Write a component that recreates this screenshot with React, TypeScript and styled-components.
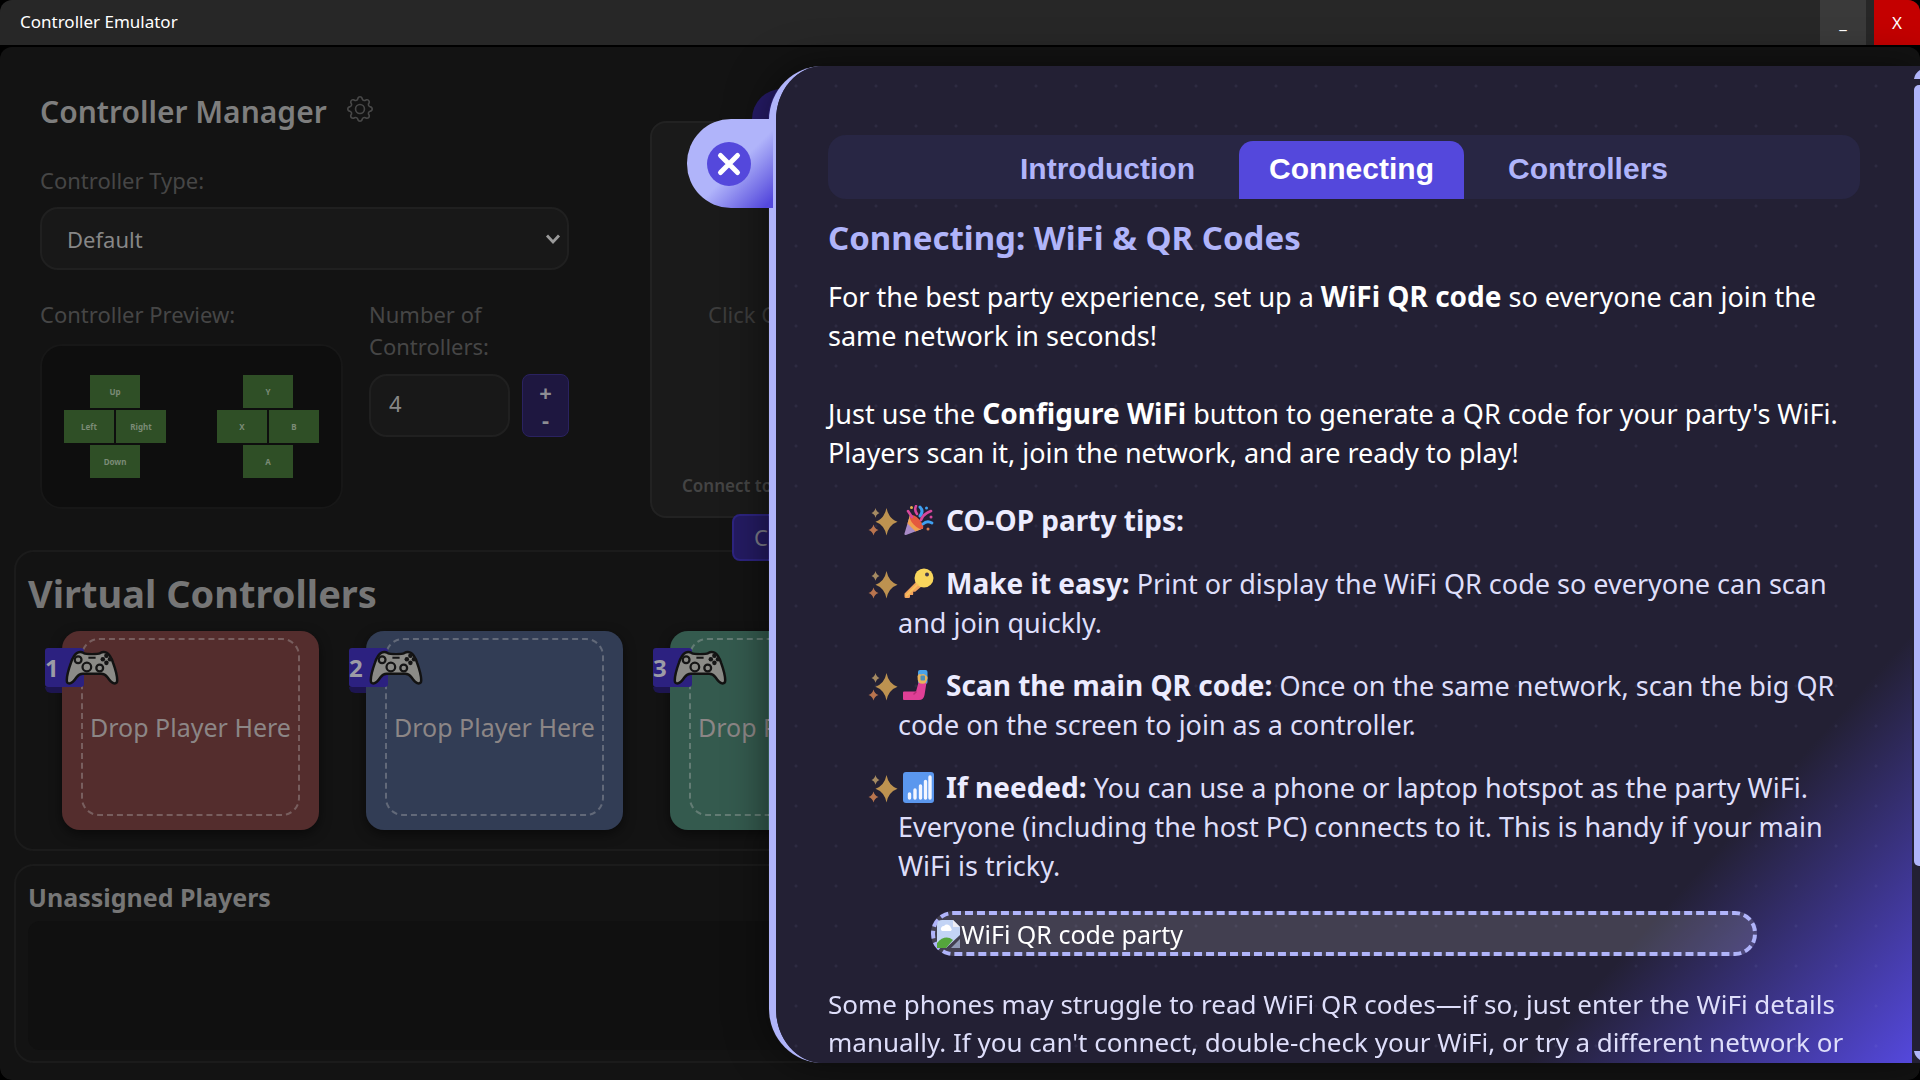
import React, { useState } from "react";
import styled, { createGlobalStyle, css } from "styled-components";
import { BsGear } from "react-icons/bs";

const accent = "#5448dc";
const lilac = "#b0b4fa";

const GlobalStyle = createGlobalStyle`
  *, *::before, *::after { box-sizing: border-box; }
  body {
    margin: 0;
    background: #000;
    font-family: "Noto Sans", "Open Sans", sans-serif;
    overflow: hidden;
  }
  h1, h2, p, ul { margin: 0; padding: 0; }
  button, input, select { font-family: inherit; margin: 0; }
`;

/* ---------- window frame ---------- */

const Window = styled.div`
  display: flex;
  flex-direction: column;
  gap: 2px;
  min-height: 100vh;
  border-radius: 12px;
  overflow: hidden;
  background: #000;
`;

const TitleBar = styled.header`
  display: flex;
  align-items: stretch;
  gap: 8px;
  height: 45px;
  background: #272727;
  color: #fff;
`;

const WindowTitle = styled.span`
  flex: 1;
  padding-left: 20px;
  font-size: 17px;
  line-height: 44px;
`;

const WindowButton = styled.button<{ $danger?: boolean }>`
  width: 46px;
  border: 0;
  padding: 0;
  font-size: 17px;
  color: #fff;
  background: ${(p) => (p.$danger ? "#c40000" : "#3a3a3a")};
`;

const Main = styled.main`
  flex: 1;
  display: flex;
  flex-direction: column;
  padding: 0 14px 17px;
  border-radius: 12px;
  background: #131313;
`;

/* ---------- manager ---------- */

const Top = styled.div`
  display: flex;
  gap: 81px;
  padding: 45px 26px 0;
`;

const Manager = styled.section`
  width: 529px;
`;

const ManagerTitle = styled.h1`
  display: flex;
  align-items: center;
  gap: 20px;
  margin-bottom: 32px;
  font-size: 30px;
  font-weight: 600;
  line-height: 40px;
  color: #7e7e7e;
`;

const GearButton = styled.button`
  display: flex;
  border: 0;
  padding: 0 0 6px;
  background: none;
  color: #484848;
`;

const Label = styled.label`
  display: block;
  font-size: 22px;
  line-height: 32px;
  color: #464646;
`;

const field = css`
  height: 63px;
  border: 2px solid #202020;
  border-radius: 18px;
  background: #181818;
  color: #878787;
  font-size: 22px;
`;

const SelectWrap = styled.div`
  display: grid;
  align-items: center;
  margin: 11px 0 28px;
  & > * { grid-area: 1 / 1; }
  svg { justify-self: end; margin-right: 8px; pointer-events: none; }
`;

const Select = styled.select`
  ${field}
  width: 100%;
  padding: 0 25px;
  appearance: none;
`;

const Settings = styled.div`
  display: grid;
  grid-template-columns: 303px minmax(0, 1fr);
  gap: 26px;
`;

const Preview = styled.div`
  display: flex;
  justify-content: space-between;
  margin-top: 14px;
  padding: 29px 22px;
  border: 2px solid #171717;
  border-radius: 22px;
  background: #0e0e0e;
`;

const Pad = styled.div`
  display: flex;
  flex-wrap: wrap;
  justify-content: center;
  gap: 2px;
  width: 102px;
`;

const PadKey = styled.span`
  width: 50px;
  height: 33px;
  background: #2f4f26;
  color: #7b8b76;
  font-size: 8px;
  font-weight: 700;
  line-height: 33px;
  text-align: center;
  &:first-child, &:last-child { margin: 0 26px; }
`;

const CountRow = styled.div`
  display: flex;
  gap: 12px;
  margin-top: 12px;
`;

const CountInput = styled.input`
  ${field}
  flex: 1;
  min-width: 0;
  padding: 0 18px 6px;
`;

const Stepper = styled.div`
  display: flex;
  flex-direction: column;
  width: 47px;
  padding: 4px 0;
  border: 1px solid #2a2260;
  border-radius: 8px;
  background: #1e1740;
`;

const StepButton = styled.button`
  flex: 1;
  border: 0;
  padding: 0;
  background: none;
  color: #8d8d93;
  font-size: 22px;
  font-weight: 700;
  line-height: 22px;
`;

/* ---------- main QR code ---------- */

const QrColumn = styled.section`
  position: relative;
  z-index: 1;
  display: flex;
  flex-direction: column;
  width: 430px;
  margin: 29px 0 -11px;
`;

const QrBox = styled.div`
  display: flex;
  flex-direction: column;
  justify-content: space-between;
  height: 397px;
  padding: 175px 30px 16px;
  border: 2px solid #222;
  border-radius: 16px;
  background: #1a1a1a;
  color: #3c3c3c;
`;

const QrHint = styled.p`
  padding-left: 26px;
  font-size: 22px;
  line-height: 32px;
`;

const QrCaption = styled.p`
  font-size: 17px;
  font-weight: 600;
  line-height: 28px;
  color: #444;
`;

const ConfigureButton = styled.button`
  align-self: center;
  width: 266px;
  height: 47px;
  margin-top: -4px;
  border: 2px solid #2d2480;
  border-radius: 8px;
  padding: 0 20px 2px;
  background: #241b62;
  color: #7c7c88;
  font-size: 22px;
  text-align: left;
`;

const HelpButton = styled.button`
  position: absolute;
  top: -32px;
  left: 102px;
  width: 60px;
  height: 60px;
  border: 0;
  border-radius: 50%;
  background: #261b68;
`;

/* ---------- player sections ---------- */

const Section = styled.section`
  display: flex;
  flex-direction: column;
  padding: 15px 12px 19px;
  border: 2px solid #1b1b1b;
  border-radius: 20px;
  & + & { flex: 1; margin-top: 13px; padding-bottom: 11px; }
`;

const SectionTitle = styled.h2<{ $small?: boolean }>`
  font-size: ${(p) => (p.$small ? 25 : 38)}px;
  font-weight: 700;
  line-height: ${(p) => (p.$small ? 32 : 52)}px;
  color: #767676;
`;

const Cards = styled.div`
  display: flex;
  gap: 47px;
  padding: 12px 34px 0;
`;

const Card = styled.div<{ $color: string }>`
  position: relative;
  display: flex;
  width: 257px;
  height: 199px;
  padding: 7px 19px 14px;
  border-radius: 18px;
  background: ${(p) => p.$color};
  box-shadow: 0 4px 12px rgba(0, 0, 0, 0.5);
`;

const DropZone = styled.div`
  flex: 1;
  display: flex;
  align-items: center;
  justify-content: center;
  border: 2px dashed rgba(190, 190, 190, 0.34);
  border-radius: 18px;
  color: #8c8686;
  font-size: 25px;
  white-space: nowrap;
`;

const Badge = styled.div`
  position: absolute;
  top: 17px;
  left: -17px;
  z-index: 0;
  display: flex;
  align-items: center;
  height: 39px;
  color: #9c9ca6;
  font-size: 24px;
  font-weight: 700;
  &::before {
    content: "";
    position: absolute;
    z-index: -1;
    inset: 0 auto 0 0;
    width: 39px;
    border-radius: 3px;
    background: #2c2180;
  }
  &::after {
    content: "";
    position: absolute;
    top: 39px;
    left: 0;
    width: 17px;
    height: 6px;
    border-radius: 0 0 0 6px;
    background: #1d1550;
  }
  svg { margin-left: 6px; }
`;

const Unassigned = styled.div`
  flex: 1;
  min-height: 128px;
  margin-top: 8px;
  border-radius: 12px;
  background: #101010;
`;

/* ---------- help drawer ---------- */

const Drawer = styled.aside`
  position: fixed;
  z-index: 2;
  top: 66px;
  right: 0;
  bottom: 17px;
  width: 60%;
  padding-left: 1px;
  box-shadow: 0 0 40px rgba(0, 0, 0, 0.5);
  border-radius: 54px 0 0 54px;
`;

const DrawerBody = styled.div`
  display: flex;
  height: 100%;
  overflow: hidden;
  border-left: 7px solid ${lilac};
  border-radius: 54px 0 0 54px;
  background: #232034;
`;

const CloseTab = styled.button`
  position: absolute;
  top: 53px;
  left: -81px;
  display: flex;
  align-items: center;
  width: 86px;
  height: 89px;
  border: 0;
  border-radius: 44px 0 0 44px;
  padding: 0 0 0 20px;
  background: linear-gradient(135deg, ${lilac} 55%, ${accent} 95%);
`;

const DrawerContent = styled.div`
  flex: 1;
  padding: 69px 52px 0;
  background:
    radial-gradient(circle, rgba(176, 180, 250, 0.07) 1px, transparent 2px) 0 0 / 40px 40px,
    linear-gradient(132deg, #232034 81%, ${accent} 100%);
`;

const Scrollbar = styled.div`
  display: flex;
  flex-direction: column;
  justify-content: space-between;
  width: 8px;
  padding: 4px 0 3px 2px;
`;

const Thumb = styled.div`
  flex: 1;
  margin: 6px 0 185px;
  border-radius: 5px 0 0 5px;
  background: ${lilac};
`;

const Tabs = styled.nav`
  display: flex;
  justify-content: center;
  gap: 14px;
  padding-top: 6px;
  border-radius: 18px;
  background: #282644;
`;

const Tab = styled.button<{ $active: boolean }>`
  height: 58px;
  border: 0;
  border-radius: 14px 14px 0 0;
  padding: 0 30px 2px;
  background: ${(p) => (p.$active ? accent : "transparent")};
  color: ${(p) => (p.$active ? "#fff" : lilac)};
  font-family: "Liberation Sans", Arial, sans-serif;
  font-size: 30px;
  font-weight: 700;
`;

const DrawerTitle = styled.h2`
  margin: 17px 0;
  font-size: 33px;
  font-weight: 700;
  line-height: 44px;
  color: ${lilac};
`;

const bodyText = css`
  font-size: 27px;
  line-height: 39px;
  strong { font-size: 28px; line-height: 1; }
`;

const Intro = styled.p`
  ${bodyText}
  margin-bottom: 39px;
  color: #fff;
`;

const Tips = styled.ul`
  ${bodyText}
  display: flex;
  flex-direction: column;
  gap: 24px;
  margin-top: -10px;
  padding-left: 70px;
  list-style: none;
  color: #dedefa;
  strong { color: #ececff; }
`;

const Tip = styled.li`
  svg { vertical-align: -5px; }
  svg:first-child { margin-left: -30px; }
  svg + svg { margin: 0 12px 0 5px; }
`;

const Picture = styled.div`
  display: flex;
  align-items: center;
  width: 80%;
  height: 45px;
  margin: 26px auto 29px;
  padding-left: 2px;
  border: 4px dashed ${lilac};
  border-radius: 22px;
  background: rgba(255, 255, 255, 0.14);
  color: #fff;
  font-size: 25px;
`;

const Footnote = styled.p`
  font-size: 26px;
  line-height: 38px;
  color: #dedefa;
`;

/* ---------- drawings ---------- */

const Sparkles = () => (
  <svg width="30" height="28" viewBox="0 0 30 28" aria-hidden="true">
    <path d="M18.500 0q2 10.500 11 13.700q-9 3.200-11 13.800q-2-10.600-11-13.800q9-3.200 11-13.700z" fill="#bd9250" />
    <path d="M7.500 0q.8 3.800 4 4.900q-3.200 1.100-4 4.900q-.8-3.800-4-4.900q3.200-1.100 4-4.900z" fill="#a58a62" />
    <path d="M5.500 16.500q1.100 4.300 5 5.500q-3.900 1.200-5 5.500q-1.100-4.300-5-5.500q3.900-1.200 5-5.500z" fill="#b9744e" />
  </svg>
);

const Popper = () => (
  <svg width="31" height="31" viewBox="0 0 31 31" role="img" aria-label="Party popper">
    <path d="M7 10L1.500 28.500q-.4 1.800 1.500 1.500L20 23.500z" fill="#a98bc8" />
    <path d="M7 10L4.500 18.500L12.500 26.500L20 23.500z" fill="#f0a04e" />
    <ellipse cx="13.500" cy="17" rx="3.800" ry="9" transform="rotate(-43 13.500 17)" fill="#e4583e" />
    <path d="M5 6l4 6M14 9q-3-4-1-8" stroke="#d7479c" strokeWidth="2.600" fill="none" strokeLinecap="round" />
    <path d="M17 2q4 4 0 9" stroke="#3f9ff0" strokeWidth="3" fill="none" strokeLinecap="round" />
    <path d="M18 15q2-6 10-9" stroke="#d7479c" strokeWidth="2.600" fill="none" strokeLinecap="round" />
    <path d="M20 19q4-4 9-1" stroke="#3f9ff0" strokeWidth="2.800" fill="none" strokeLinecap="round" />
    <circle cx="8.500" cy="2.500" r="1.500" fill="#e8b44e" />
    <circle cx="23.500" cy="3" r="1.500" fill="#3f9ff0" />
    <circle cx="28" cy="12" r="1.500" fill="#d7479c" />
    <circle cx="25" cy="24" r="1.500" fill="#d7794e" />
  </svg>
);

const Key = () => (
  <svg width="31" height="31" viewBox="0 0 31 31" role="img" aria-label="Key">
    <path d="M14 13L1.500 25.500v3.200q0 1.300 1.300 1.300h3q1.200 0 1.200-1.200v-1.700h2q1.200 0 1.200-1.200v-2.200h2L19 18z" fill="#f2a35c" />
    <circle cx="21" cy="10" r="9.500" fill="#f8d55c" />
    <path d="M15 16L3 28" stroke="#f8c05c" strokeWidth="2" />
    <circle cx="24" cy="6.500" r="2" fill="#433b4e" />
  </svg>
);

const Selfie = () => (
  <svg width="31" height="31" viewBox="0 0 31 31" role="img" aria-label="Selfie">
    <rect x="15" y="0" width="9.500" height="14" rx="2" fill="#4aa3e8" />
    <path d="M14.500 6q1.500-3 3.500-1.500q3-1.500 5 1q2.500 1 1 4.500l-2 4h-5.500q-2.500-4-2-8z" fill="#e9b45c" />
    <rect x="17.500" y="5.500" width="4.500" height="5" rx="1" fill="#4d90b8" />
    <path d="M15.500 12.500q4 2.500 8 0L21.500 25q-.8 5-5.500 5H1q-1 0-1-1V22.500q0-1 1-1h12z" fill="#e03f96" />
    <path d="M13.500 21.500l-3 3" stroke="#b92c77" strokeWidth="1.500" />
  </svg>
);

const Signal = () => (
  <svg width="31" height="31" viewBox="0 0 31 31" role="img" aria-label="Signal bars">
    <rect width="31" height="31" rx="3" fill="#5b97ee" />
    <path d="M6.500 26v-4M12 26v-8M17.500 26V14M22.500 26V9.500M27 26V5" stroke="#f4f6ff" strokeWidth="3.400" strokeLinecap="round" />
  </svg>
);

const GamepadIcon = () => (
  <svg width="54" height="35" viewBox="0 0 52 34" aria-hidden="true">
    <path
      d="M12 2.500q3-1.500 6 0.500q2 1 8 1t8-1q3-2 6-.5q4 2 6.500 10q4 11 4 17q0 3-2.500 3q-3 0-7-6q-2.500-3.500-6-3.500H17q-3.500 0-6 3.500q-4 6-7 6q-2.500 0-2.500-3q0-6 4-17q2.500-8 6.500-10z"
      fill="#8b8b87" stroke="#121212" strokeWidth="2.400"
    />
    <g fill="none" stroke="#151515" strokeWidth="2.200">
      <circle cx="12.500" cy="9.500" r="3.300" />
      <circle cx="21" cy="16.500" r="4.200" />
      <circle cx="33.500" cy="17.500" r="3.300" />
    </g>
    <path d="M22.500 7.500h7" stroke="#151515" strokeWidth="2" />
    <g fill="#151515">
      <circle cx="40" cy="5.500" r="2.200" /><circle cx="40" cy="12.500" r="2.200" />
      <circle cx="36.500" cy="9" r="2.200" /><circle cx="43.500" cy="9" r="2.200" />
    </g>
  </svg>
);

const Chevron = () => (
  <svg width="16" height="12" viewBox="0 0 16 12" aria-hidden="true">
    <path d="M2 2.500l6 6.500l6-6.500" fill="none" stroke="#9a9a9a" strokeWidth="2.800" />
  </svg>
);

const CloseIcon = () => (
  <svg width="44" height="44" viewBox="0 0 44 44" aria-hidden="true">
    <circle cx="22" cy="22" r="22" fill={accent} />
    <path d="M13.500 13.500l17 17M30.500 13.500l-17 17" stroke="#fff" strokeWidth="5" strokeLinecap="round" />
  </svg>
);

const MissingPicture = () => (
  <svg width="24" height="28" viewBox="0 0 24 28" aria-hidden="true">
    <path d="M5 0h11l7 7v8L9 28H0V5q0-5 5-5z" fill="#c3d4f5" />
    <path d="M4 10a3 3 0 0 1 3-4a4 4 0 0 1 7 2a2 2 0 0 1 0 3H5z" fill="#fff" />
    <path d="M0 28v-5q8-9 16-3L9 28z" fill="#55a63c" />
    <path d="M16 0v7h7z" fill="#eeeef6" />
    <path d="M23 19v9h-9z" fill="#c3d4f5" opacity=".6" />
  </svg>
);

const ArrowUp = () => (
  <svg width="6" height="9" viewBox="0 0 6 9" aria-hidden="true"><path d="M6 0v9H0q1-6 6-9z" fill={lilac} /></svg>
);
const ArrowDown = () => (
  <svg width="6" height="9" viewBox="0 0 6 9" aria-hidden="true"><path d="M6 9V0H0q1 6 6 9z" fill={lilac} /></svg>
);

/* ---------- page ---------- */

const slots = ["#542d2d", "#323d55", "#345a4e"];
const pads = [["Up", "Left", "Right", "Down"], ["Y", "X", "B", "A"]];
const tabs = ["Introduction", "Connecting", "Controllers"];

export default function App() {
  const [tab, setTab] = useState("Connecting");
  const [count, setCount] = useState(4);
  return (
    <>
      <GlobalStyle />
      <Window>
        <TitleBar>
          <WindowTitle>Controller Emulator</WindowTitle>
          <WindowButton aria-label="Minimize">_</WindowButton>
          <WindowButton $danger aria-label="Close window">X</WindowButton>
        </TitleBar>
        <Main>
          <Top>
            <Manager>
              <ManagerTitle>
                Controller Manager
                <GearButton aria-label="Settings"><BsGear size={26} /></GearButton>
              </ManagerTitle>
              <Label htmlFor="type">Controller Type:</Label>
              <SelectWrap>
                <Select id="type"><option>Default</option></Select>
                <Chevron />
              </SelectWrap>
              <Settings>
                <div>
                  <Label as="div">Controller Preview:</Label>
                  <Preview>
                    {pads.map((keys) => (
                      <Pad key={keys[0]}>{keys.map((k) => <PadKey key={k}>{k}</PadKey>)}</Pad>
                    ))}
                  </Preview>
                </div>
                <div>
                  <Label htmlFor="count">Number of<br />Controllers:</Label>
                  <CountRow>
                    <CountInput id="count" value={count} onChange={(e) => setCount(Number(e.target.value) || 0)} />
                    <Stepper>
                      <StepButton aria-label="More" onClick={() => setCount(count + 1)}>+</StepButton>
                      <StepButton aria-label="Fewer" onClick={() => setCount(count - 1)}>-</StepButton>
                    </Stepper>
                  </CountRow>
                </div>
              </Settings>
            </Manager>
            <QrColumn>
              <QrBox>
                <QrHint>Click Configure</QrHint>
                <QrCaption>Connect to WiFi</QrCaption>
              </QrBox>
              <ConfigureButton>Configure WiFi</ConfigureButton>
              <HelpButton aria-label="Help" />
            </QrColumn>
          </Top>
          <Section>
            <SectionTitle>Virtual Controllers</SectionTitle>
            <Cards>
              {slots.map((color, i) => (
                <Card key={color} $color={color}>
                  <DropZone>Drop Player Here</DropZone>
                  <Badge>{i + 1}<GamepadIcon /></Badge>
                </Card>
              ))}
            </Cards>
          </Section>
          <Section>
            <SectionTitle $small>Unassigned Players</SectionTitle>
            <Unassigned />
          </Section>
        </Main>
      </Window>
      <Drawer>
        <DrawerBody>
          <DrawerContent>
            <Tabs>
              {tabs.map((t) => (
                <Tab key={t} $active={t === tab} onClick={() => setTab(t)}>{t}</Tab>
              ))}
            </Tabs>
            <DrawerTitle>Connecting: WiFi &amp; QR Codes</DrawerTitle>
            <Intro>
              For the best party experience, set up a <strong>WiFi QR code</strong> so everyone can join the same network in seconds!
            </Intro>
            <Intro>
              Just use the <strong>Configure WiFi</strong> button to generate a QR code for your party's WiFi. Players scan it, join the network, and are ready to play!
            </Intro>
            <Tips>
              <Tip><Sparkles /><Popper /><strong>CO-OP party tips:</strong></Tip>
              <Tip><Sparkles /><Key /><strong>Make it easy:</strong> Print or display the WiFi QR code so everyone can scan and join quickly.</Tip>
              <Tip><Sparkles /><Selfie /><strong>Scan the main QR code:</strong> Once on the same network, scan the big QR code on the screen to join as a controller.</Tip>
              <Tip><Sparkles /><Signal /><strong>If needed:</strong> You can use a phone or laptop hotspot as the party WiFi. Everyone (including the host PC) connects to it. This is handy if your main WiFi is tricky.</Tip>
            </Tips>
            <Picture><MissingPicture />WiFi QR code party</Picture>
            <Footnote>
              Some phones may struggle to read WiFi QR codes—if so, just enter the WiFi details manually. If you can't connect, double-check your WiFi, or try a different network or
            </Footnote>
          </DrawerContent>
          <Scrollbar aria-hidden="true"><ArrowUp /><Thumb /><ArrowDown /></Scrollbar>
        </DrawerBody>
        <CloseTab aria-label="Close help"><CloseIcon /></CloseTab>
      </Drawer>
    </>
  );
}
